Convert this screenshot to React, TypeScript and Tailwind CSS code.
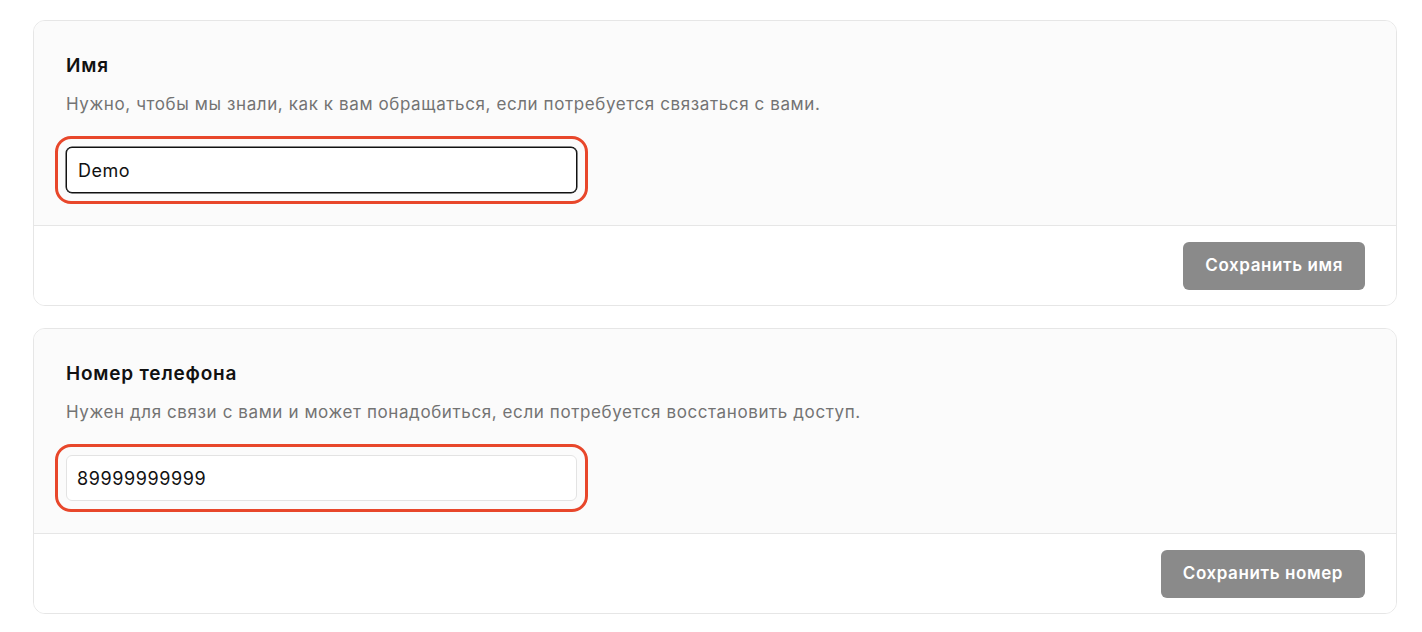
import { useState } from 'react';

type FieldCardProps = {
  title: string;
  hint: string;
  value: string;
  focused?: boolean;
  action: string;
  onChange: (v: string) => void;
};

function FieldCard({ title, hint, value, focused, action, onChange }: FieldCardProps) {
  return (
    <section className="rounded-xl border border-[#e6e6e6] bg-white overflow-hidden">
      <div className="bg-[#fbfbfb] px-[32px] pt-[32px] pb-[32px]">
        <h2 className="text-[19px] leading-[26px] font-semibold tracking-[0.8px] text-[#111]">{title}</h2>
        <p className="mt-[13px] text-[17px] leading-[24px] tracking-[0.6px] text-[#737373]">{hint}</p>
        <div className="relative mt-[31px] w-[511px]">
          {/* highlight ring around the field */}
          <div className="pointer-events-none absolute -inset-[11px] rounded-[16px] border-[3px] border-[#e8472b]" />
          <input
            value={value}
            onChange={(e) => onChange(e.target.value)}
            className={
              focused
                ? 'block w-full h-[46px] rounded-md border border-[#111] bg-white px-[11px] text-[18px] tracking-[0.5px] text-[#111] outline-none shadow-[0_0_0_0.5px_#111]'
                : 'block w-full h-[46px] rounded-md border border-[#e3e3e3] bg-white px-[10px] text-[18px] tracking-[0.6px] text-[#111] outline-none'
            }
          />
        </div>
      </div>
      <div className="flex justify-end border-t border-[#e6e6e6] bg-white px-[31px] pt-[16px] pb-[15px]">
        <button className="h-[48px] rounded-md bg-[#8a8a8a] px-[22px] text-[17px] font-semibold tracking-[0.6px] text-white">
          {action}
        </button>
      </div>
    </section>
  );
}

export default function App() {
  const [name, setName] = useState('Demo');
  const [phone, setPhone] = useState('89999999999');

  return (
    <div className="min-h-screen bg-white pt-[20px] pl-[33px] pr-[25px] font-['Inter',sans-serif]">
      <div className="flex flex-col gap-[22px]">
        <FieldCard
          title="Имя"
          hint="Нужно, чтобы мы знали, как к вам обращаться, если потребуется связаться с вами."
          value={name}
          focused
          action="Сохранить имя"
          onChange={setName}
        />
        <FieldCard
          title="Номер телефона"
          hint="Нужен для связи с вами и может понадобиться, если потребуется восстановить доступ."
          value={phone}
          action="Сохранить номер"
          onChange={setPhone}
        />
      </div>
    </div>
  );
}
